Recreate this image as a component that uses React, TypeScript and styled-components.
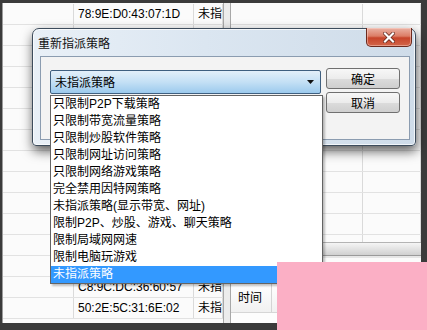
import React from "react";
import styled, { createGlobalStyle } from "styled-components";

const GlobalStyle = createGlobalStyle`
  html, body {
    margin: 0;
    padding: 0;
    background: #3b3b3b;
  }
  body {
    font-family: "Liberation Sans", "Noto Sans CJK SC", sans-serif;
    font-size: 12px;
    color: #000;
  }
`;

const Screen = styled.div`
  position: relative;
  width: 427px;
  height: 330px;
  overflow: hidden;
  box-sizing: border-box;
  padding: 3px 6px 7px 2px;
  background: #3b3b3b;
  display: flex;
`;

const LeftPane = styled.div`
  width: 221px;
  box-sizing: border-box;
  background: #fbfbfb;
  border-left: 1px solid #9c9c9c;
  padding-top: 1px;
  overflow: hidden;
`;

const Row = styled.div<{ $cols: string }>`
  display: grid;
  grid-template-columns: ${(p) => p.$cols};
  height: 21px;
  box-sizing: border-box;
  border-bottom: 1px solid #e2e2e2;
`;

const Cell = styled.div`
  box-sizing: border-box;
  border-right: 1px solid #dadada;
  padding-left: 4px;
  line-height: 20px;
  white-space: nowrap;
  overflow: hidden;
`;

const Splitter = styled.div`
  width: 8px;
  box-sizing: border-box;
  background: #ececec;
  border-left: 1px solid #a8a8a8;
  border-right: 1px solid #a8a8a8;
`;

const RightPane = styled.div`
  flex: 1;
  display: flex;
  flex-direction: column;
  background: #fbfbfb;
  overflow: hidden;
`;

const RightGrid = styled.div`
  flex: 0 0 239px;
  padding-top: 1px;
  box-sizing: border-box;
  overflow: hidden;
`;

const HScroll = styled.div`
  flex: 0 0 14px;
  box-sizing: border-box;
  background: linear-gradient(#f5f5f5, #d0d0d0);
  border-top: 1px solid #b4b4b4;
  border-bottom: 1px solid #9a9a9a;
`;

const Band = styled.div`
  flex: 0 0 27px;
  box-sizing: border-box;
  border-top: 2px solid #e6e6e6;
  border-bottom: 1px solid #a0a0a0;
`;

const DetailPanel = styled.div`
  flex: 1;
  background: #fdfdfd;
`;

const DetailHeader = styled.div`
  display: flex;
  height: 30px;
  box-sizing: border-box;
  border-bottom: 1px solid #d6d6d6;
  background: linear-gradient(#ffffff, #f1f1f1);
`;

const HeaderCell = styled.div`
  width: 41px;
  box-sizing: border-box;
  padding-left: 7px;
  line-height: 30px;
  font-size: 12px;
  border-right: 1px solid #d4d4d4;
`;

const Dialog = styled.div`
  position: absolute;
  left: 32px;
  top: 28px;
  width: 384px;
  height: 118px;
  box-sizing: border-box;
  display: flex;
  flex-direction: column;
  border: 1px solid #3d4c5c;
  border-radius: 7px 7px 4px 4px;
  background: linear-gradient(to right, #e9f0f7 0%, #dbe6f1 45%, #cfdce9 100%);
  box-shadow: 1px 5px 12px rgba(0, 0, 0, 0.65), inset 0 0 0 1px rgba(255, 255, 255, 0.7);
`;

const TitleBar = styled.div`
  height: 27px;
  flex: none;
  display: flex;
  justify-content: space-between;
  align-items: center;
  padding-left: 5px;
`;

const Title = styled.span`
  font-family: "Noto Sans CJK SC", sans-serif;
  font-size: 12px;
  line-height: 16px;
  color: #111;
`;

const CloseButton = styled.div`
  align-self: flex-start;
  margin-top: -1px;
  margin-right: 3px;
  width: 46px;
  height: 19px;
  box-sizing: border-box;
  display: flex;
  align-items: center;
  justify-content: center;
  border: 1px solid #6b2a1e;
  border-top: none;
  border-radius: 0 0 5px 5px;
  background: linear-gradient(#eab2a4 0%, #dc7d66 45%, #c7442a 55%, #d2664a 100%);
  box-shadow: inset 0 0 0 1px rgba(255, 220, 210, 0.45);
`;

const Client = styled.div`
  flex: 1;
  margin: 0 5px 5px 7px;
  box-sizing: border-box;
  border: 1px solid #8b9cb0;
  background: #f3f3f3;
  display: flex;
  align-items: flex-start;
  gap: 5px;
  padding: 11px 0 0 9px;
`;

const Combo = styled.div`
  margin-top: 2px;
  width: 271px;
  height: 24px;
  box-sizing: border-box;
  display: flex;
  align-items: center;
  justify-content: space-between;
  padding: 0 6px 0 4px;
  border: 1px solid #3f5f7f;
  border-radius: 2px;
  background: linear-gradient(#e3eff9 0%, #c4e0f5 50%, #9ccaed 100%);
  font-family: "Noto Sans CJK SC", sans-serif;
  line-height: 16px;
`;

const ButtonColumn = styled.div`
  display: flex;
  flex-direction: column;
  gap: 3px;
`;

const Button = styled.div`
  width: 74px;
  height: 21px;
  box-sizing: border-box;
  display: flex;
  align-items: center;
  justify-content: center;
  border: 1px solid #707070;
  border-radius: 3px;
  background: linear-gradient(#f7f7f7 0%, #ececec 50%, #dcdcdc 51%, #cfcfcf 100%);
  font-family: "Noto Sans CJK SC", sans-serif;
  line-height: 16px;
`;

const Dropdown = styled.div`
  position: absolute;
  left: 50px;
  top: 95px;
  width: 273px;
  box-sizing: border-box;
  border: 1px solid #646464;
  background: #fff;
  box-shadow: 2px 2px 2px rgba(0, 0, 0, 0.25);
`;

const Option = styled.div<{ $selected?: boolean }>`
  height: 17px;
  line-height: 17px;
  padding-left: 2px;
  white-space: nowrap;
  font-family: "Liberation Sans", "Noto Sans CJK SC", sans-serif;
  font-size: 12px;
  background: ${(p) => (p.$selected ? "#3399ff" : "transparent")};
  color: ${(p) => (p.$selected ? "#fff" : "#000")};
`;

const Overlay = styled.div`
  position: absolute;
  left: 277px;
  top: 262px;
  width: 150px;
  height: 68px;
  background: #fbafc5;
`;

const leftRows: [string, string][] = [
  ["78:9E:D0:43:07:1D", "未指"],
  ["", ""],
  ["", ""],
  ["", ""],
  ["", ""],
  ["", ""],
  ["", ""],
  ["", ""],
  ["", ""],
  ["", ""],
  ["", ""],
  ["", ""],
  ["", ""],
  ["C8:9C:DC:36:60:57", "未指"],
  ["50:2E:5C:31:6E:02", "未指"],
];

const options = [
  "只限制P2P下载策略",
  "只限制带宽流量策略",
  "只限制炒股软件策略",
  "只限制网址访问策略",
  "只限制网络游戏策略",
  "完全禁用因特网策略",
  "未指派策略(显示带宽、网址)",
  "限制P2P、炒股、游戏、聊天策略",
  "限制局域网网速",
  "限制电脑玩游戏",
  "未指派策略",
];

const App: React.FC = () => {
  return (
    <>
      <GlobalStyle />
      <Screen>
        <LeftPane>
          {leftRows.map(([mac, state], i) => (
            <Row key={i} $cols="71px 120px 1fr">
              <Cell />
              <Cell>{mac}</Cell>
              <Cell>{state}</Cell>
            </Row>
          ))}
        </LeftPane>
        <Splitter />
        <RightPane>
          <RightGrid>
            {Array.from({ length: 12 }).map((_, i) => (
              <Row key={i} $cols="132px 1fr">
                <Cell />
                <Cell />
              </Row>
            ))}
          </RightGrid>
          <HScroll />
          <Band />
          <DetailPanel>
            <DetailHeader>
              <HeaderCell>时间</HeaderCell>
            </DetailHeader>
          </DetailPanel>
        </RightPane>

        <Dialog>
          <TitleBar>
            <Title>重新指派策略</Title>
            <CloseButton>
              <svg width="12" height="11" viewBox="0 0 12 11">
                <path d="M2 1.5 L10 9.5 M10 1.5 L2 9.5" stroke="#5a2016" strokeWidth="3.6" strokeLinecap="square" />
                <path d="M2 1.5 L10 9.5 M10 1.5 L2 9.5" stroke="#fff" strokeWidth="2.2" strokeLinecap="square" />
              </svg>
            </CloseButton>
          </TitleBar>
          <Client>
            <Combo>
              <span>未指派策略</span>
              <svg width="7" height="4" viewBox="0 0 7 4">
                <path d="M0 0 H7 L3.5 4 Z" fill="#111" />
              </svg>
            </Combo>
            <ButtonColumn>
              <Button>确定</Button>
              <Button>取消</Button>
            </ButtonColumn>
          </Client>
        </Dialog>

        <Dropdown>
          {options.map((o, i) => (
            <Option key={i} $selected={i === options.length - 1}>
              {o}
            </Option>
          ))}
        </Dropdown>

        <Overlay />
      </Screen>
    </>
  );
};

export default App;
